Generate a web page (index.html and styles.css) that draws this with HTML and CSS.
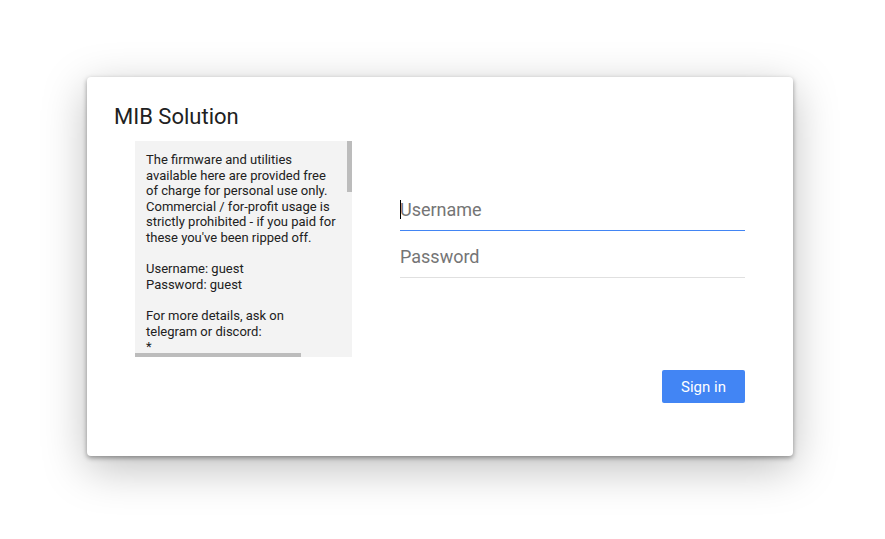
FILE: index.html
```html
<!DOCTYPE html>
<html lang="en">
<head>
    <meta charset="UTF-8">
    <meta name="viewport" content="width=device-width, initial-scale=1.0">
    <title>MIB Solution</title>
    <link rel="stylesheet" href="styles.css">
</head>
<body>
    <div class="dialog">
        <div class="dialog-title">MIB Solution</div>

        <div class="dialog-body">
            <div class="notice-box">
                <div class="notice">The firmware and utilities available here are provided free of charge for personal use only. Commercial / for-profit usage is strictly prohibited - if you paid for these you've been ripped off.

Username: guest
Password: guest

For more details, ask on telegram or discord:
* https://t.me/mib_solution_support_chat
* https://discord.gg/mibsolution-community

Please read the documentation before flashing anything to your unit. Always make a full backup of the original firmware and keep it somewhere safe.</div>
                <!-- scrollbars are drawn by hand, headless hides the real ones -->
                <div class="thumb thumb-v"></div>
                <div class="thumb thumb-h"></div>
            </div>

            <form class="login" onsubmit="return false">
                <div class="field-wrap">
                    <input class="field focused" type="text" placeholder="Username" autofocus>
                    <span class="caret"></span>
                </div>
                <input class="field" type="password" placeholder="Password">
            </form>
        </div>

        <div class="dialog-actions">
            <button class="button" type="button">Sign in</button>
        </div>
    </div>
</body>
</html>
```

FILE: styles.css
```css
html {
    font-family: Roboto, "Liberation Sans", sans-serif;
    height: 100%;
}

body {
    margin: 0;
    min-height: 100%;
    box-sizing: border-box;
    padding: 77px 0 0 87px;
    background-color: #ffffff;
}

.dialog {
    width: 706px;
    height: 379px;
    box-sizing: border-box;
    background-color: #ffffff;
    border-radius: 4px;
    box-shadow: 0 2px 5px rgba(0, 0, 0, 0.38), 0 12px 45px rgba(0, 0, 0, 0.26);
}

.dialog-title {
    padding: 28px 27px 0;
    font-size: 22px;
    line-height: 24px;
    color: #212121;
}

.dialog-body {
    display: flex;
    gap: 48px;
    padding: 12px 48px 0;
}

.notice-box {
    position: relative;
    flex: none;
    width: 217px;
    height: 216px;
    background-color: #f3f3f3;
}

.notice {
    height: 100%;
    box-sizing: border-box;
    padding: 11px 15px 0 11px;
    overflow: hidden;
    font-size: 13px;
    line-height: 15.6px;
    color: #212121;
    white-space: pre-wrap;
}

.thumb {
    position: absolute;
    background-color: #bcbcbc;
}

.thumb-v {
    top: 0;
    right: 0;
    width: 5px;
    height: 51px;
}

.thumb-h {
    left: 0;
    bottom: 0;
    width: 166px;
    height: 4px;
}

.login {
    flex: 1;
    display: flex;
    flex-direction: column;
    gap: 10px;
    padding-top: 53px;
    margin: 0;
}

.field-wrap {
    position: relative;
}

.caret {
    position: absolute;
    left: 0;
    top: 6px;
    width: 1px;
    height: 19px;
    background-color: #000000;
}

.field {
    display: block;
    width: 100%;
    box-sizing: border-box;
    padding: 4px 0 8px;
    border: none;
    border-bottom: 1px solid #e0e0e0;
    outline: none;
    font-family: inherit;
    font-size: 18px;
    line-height: 24px;
    color: #212121;
    caret-color: transparent;
    background: transparent;
}

.field::placeholder {
    color: #757575;
}

.field.focused {
    border-bottom-color: #4285f4;
}

.dialog-actions {
    display: flex;
    justify-content: flex-end;
    padding: 13px 48px 0;
}

.button {
    width: 83px;
    height: 33px;
    border: none;
    border-radius: 2px;
    background-color: #4285f4;
    color: #ffffff;
    font-family: inherit;
    font-size: 15px;
    cursor: pointer;
}
```
